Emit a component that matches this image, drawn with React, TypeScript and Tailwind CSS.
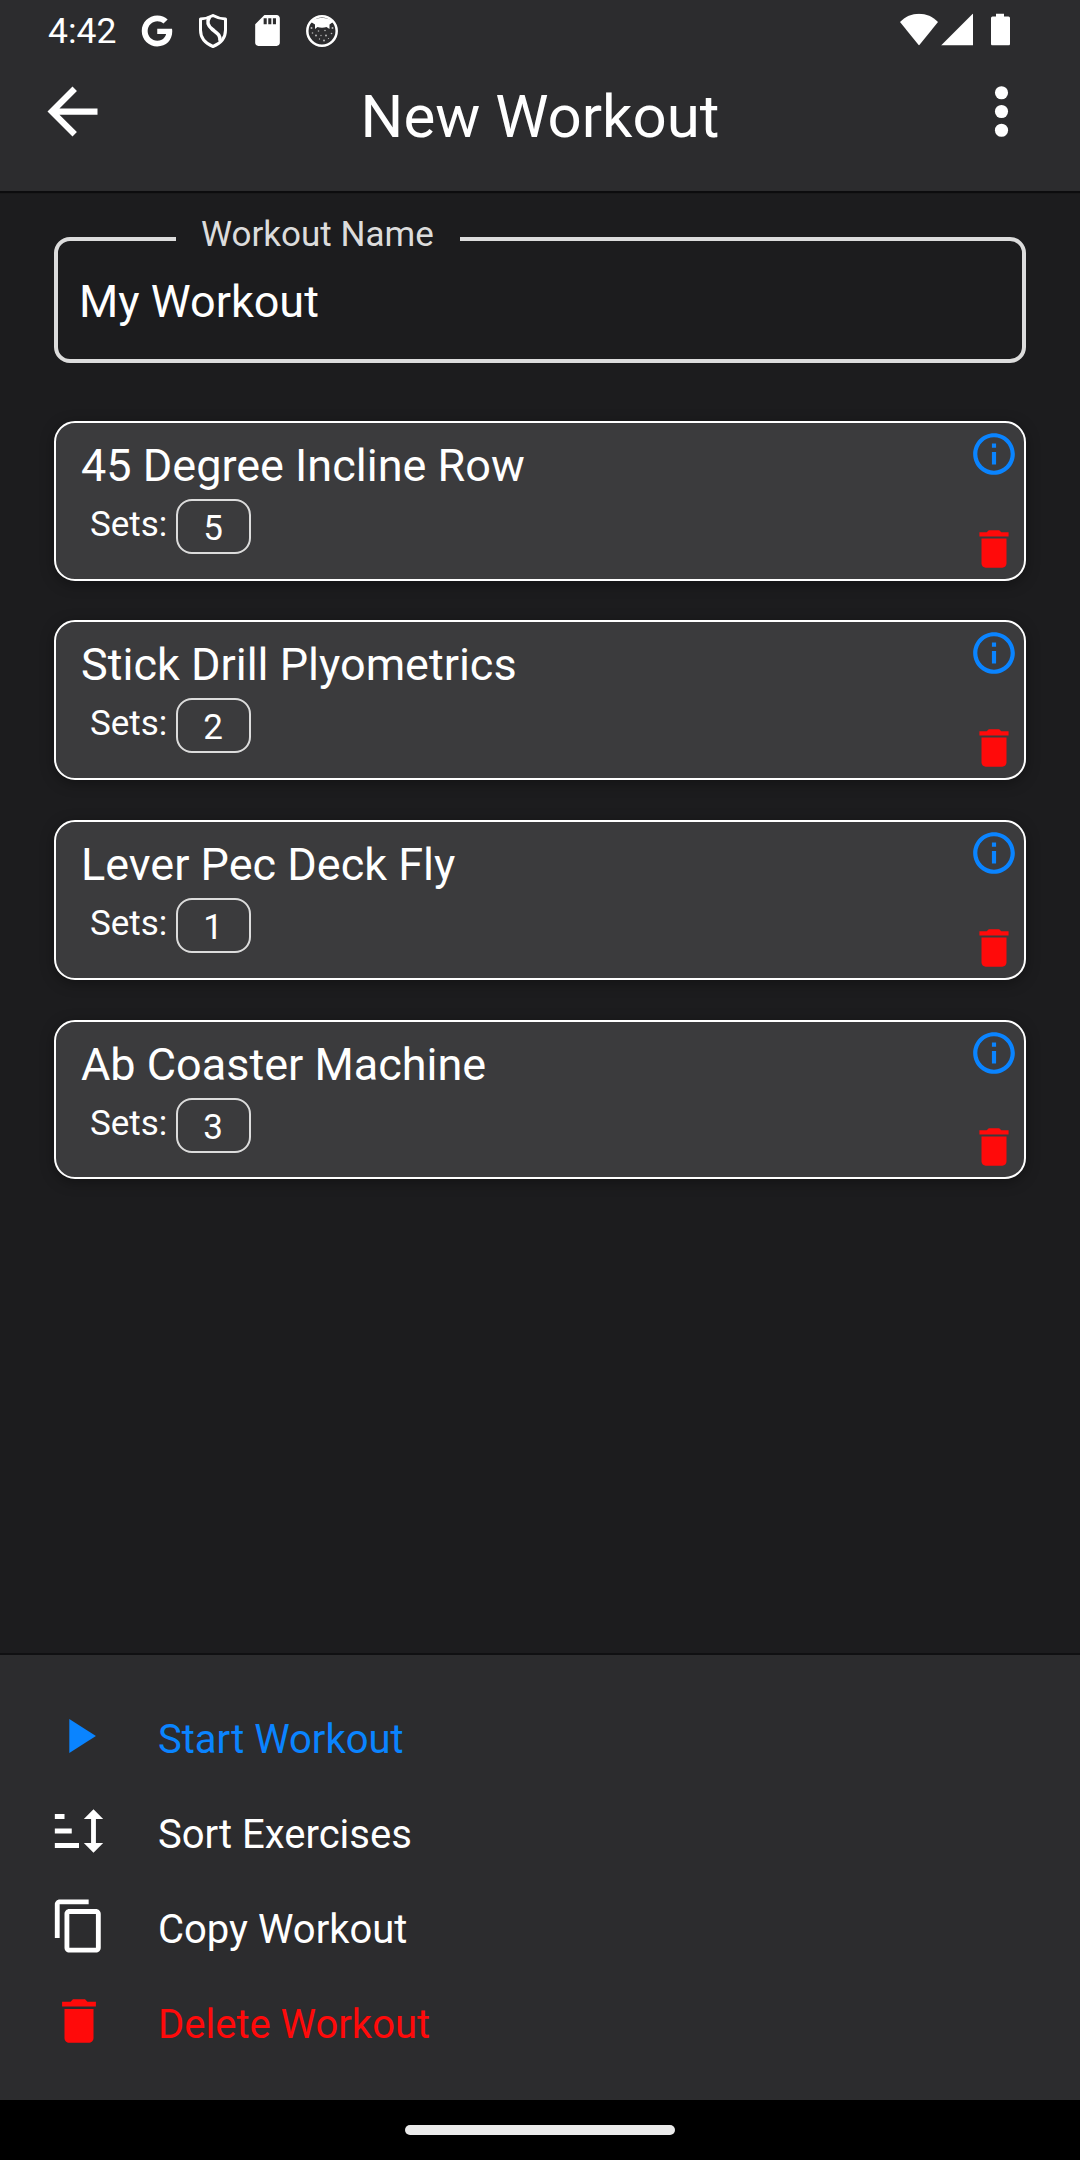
import React from "react";

const exercises = [
  { name: "45 Degree Incline Row", sets: 5 },
  { name: "Stick Drill Plyometrics", sets: 2 },
  { name: "Lever Pec Deck Fly", sets: 1 },
  { name: "Ab Coaster Machine", sets: 3 },
];

const TRASH = "M6 19c0 1.1.9 2 2 2h8c1.1 0 2-.9 2-2V7H6v12zM19 4h-3.5l-1-1h-5l-1 1H5v2h14V4z";
const INFO =
  "M11 7h2v2h-2zm0 4h2v6h-2zm1-9C6.48 2 2 6.48 2 12s4.48 10 10 10 10-4.48 10-10S17.52 2 12 2zm0 18c-4.41 0-8-3.59-8-8s3.59-8 8-8 8 3.59 8 8-3.59 8-8 8z";

const actions = [
  { label: "Start Workout", color: "text-[#0a84ff]", path: "M8 5v14l11-7z" },
  {
    label: "Sort Exercises",
    color: "text-white",
    path: "M2 5h4v2H2zM2 11h7v2H2zM2 17h10v2H2zM18 3l4 4h-3v10h3l-4 4-4-4h3V7h-3z",
  },
  {
    label: "Copy Workout",
    color: "text-white",
    path: "M16 1H4c-1.1 0-2 .9-2 2v14h2V3h12V1zm3 4H8c-1.1 0-2 .9-2 2v14c0 1.1.9 2 2 2h11c1.1 0 2-.9 2-2V7c0-1.1-.9-2-2-2zm0 16H8V7h11v14z",
  },
  { label: "Delete Workout", color: "text-[#ff0a0a]", path: TRASH },
];

function Icon({ d, className }: { d: string; className: string }) {
  return (
    <svg viewBox="0 0 24 24" fill="currentColor" className={`shrink-0 ${className}`}>
      <path d={d} />
    </svg>
  );
}

function StatusBar() {
  return (
    <div className="flex h-[61px] items-center pl-[48px] pr-[70px]">
      <span className="w-[93px] pt-[2px] text-[35.5px] leading-[61px]">4:42</span>
      <svg viewBox="0 0 488 512" fill="currentColor" className="h-8 w-8">
        <path d="M488 261.8C488 403.3 391.1 504 248 504 110.8 504 0 393.2 0 256S110.8 8 248 8c66.8 0 123 24.5 166.3 64.9l-67.5 64.9C258.5 52.6 94.3 116.6 94.3 256c0 86.5 69.1 156.6 153.7 156.6 98.2 0 135-70.4 140.8-106.9H248v-85.3h236.1c2.3 12.7 3.9 24.9 3.9 41.4z" />
      </svg>
      <svg viewBox="0 0 28 34" fill="none" stroke="currentColor" strokeWidth="3" strokeLinejoin="round" className="ml-[26px] h-[34px] w-7">
        <path d="M14 1.5C10.5 3.5 6 4.8 1.5 5v11c0 7.5 5 13.500 12.500 16.500C21.500 29.500 26.500 23.500 26.500 16V5C22 4.800 17.500 3.500 14 1.500Z" />
        <path d="M10.500 3C7.500 8 8.500 11.500 13.500 15.500S21.500 21 21 27" strokeWidth="3.6" />
      </svg>
      <Icon
        d="M18 2h-8L4.020 8 4 20c0 1.100.900 2 2 2h12c1.100 0 2-.900 2-2V4c0-1.100-.900-2-2-2zm-3.500 6h-2V4h2v4zm3 0h-2V4h2v4zm-6 0h-2V4h2v4z"
        className="ml-[22px] h-[37px] w-[37px]"
      />
      <svg viewBox="0 0 32 32" fill="currentColor" className="ml-[20px] h-8 w-8">
        <circle cx="16" cy="16" r="14.7" fill="none" stroke="currentColor" strokeWidth="2.5" />
        <path d="M5 7C9 1.500 23 1.500 27 7L23.500 9.500V14L20.500 12C18 13 14 13 11.500 12L9 14V9.500Z" />
        <g opacity=".65">
          <circle cx="5.5" cy="13" r="1" />
          <circle cx="26.5" cy="13" r="1" />
          <circle cx="12.5" cy="16" r=".8" />
          <circle cx="19" cy="15.5" r=".8" />
          <circle cx="6.5" cy="18" r=".8" />
          <circle cx="10" cy="20.5" r="1" />
          <circle cx="15" cy="20.5" r=".7" />
          <circle cx="20" cy="20.5" r="1" />
          <circle cx="25.5" cy="18.5" r=".8" />
          <circle cx="13.5" cy="24" r=".7" />
          <circle cx="18" cy="25.5" r="1" />
          <circle cx="22.5" cy="23.5" r=".6" />
        </g>
      </svg>
      <svg viewBox="0 0 38 32" fill="currentColor" className="ml-auto h-8 w-[38px] -translate-y-[1.5px]">
        <path d="M19 32 0 8.600C10 -2.600 28 -2.600 38 8.600Z" />
      </svg>
      <svg viewBox="0 0 32 32" fill="currentColor" className="ml-[3px] h-8 w-8 -translate-y-[1.5px]">
        <path d="M32 0v32H0z" />
      </svg>
      <svg viewBox="0 0 19 32" fill="currentColor" className="ml-[18px] h-8 w-[19px] -translate-y-[1.5px]">
        <path d="M5 0h8v3h4.500Q19 3 19 4.500v26Q19 32 17.500 32h-16Q0 32 0 30.500v-26Q0 3 1.500 3H5z" />
      </svg>
    </div>
  );
}

export default function App() {
  return (
    <div className="flex h-[2160px] w-[1080px] flex-col overflow-hidden bg-[#1c1c1e] font-['Roboto',sans-serif] text-white">
      <header className="h-[191px] shrink-0 bg-[#2c2c2e] shadow-[0_2px_1px_#0c0c0e]">
        <StatusBar />
        <div className="flex items-center justify-between pl-[35px] pr-[41px] pt-[8px]">
          <Icon d="M20 11H7.830l5.590-5.590L12 4l-8 8 8 8 1.410-1.410L7.830 13H20v-2z" className="h-[75px] w-[75px]" />
          <h1 className="pl-[6px] pt-[10px] text-[60px] leading-[75px]">New Workout</h1>
          <svg viewBox="0 0 24 24" fill="currentColor" className="h-[75px] w-[75px]">
            <circle cx="12" cy="6" r="2.1" />
            <circle cx="12" cy="12" r="2.1" />
            <circle cx="12" cy="18" r="2.1" />
          </svg>
        </div>
      </header>

      <main className="flex flex-1 flex-col px-[54px] pt-[24px]">
        <fieldset className="h-[148px] rounded-[16px] border-4 border-[#dcdcdc] pl-[21px]">
          <legend className="ml-[97px] pb-[8px] pl-[25px] pr-[26px] text-[35px] leading-[40px] text-[#dcdcdc]">
            Workout Name
          </legend>
          <div className="pt-[11px] text-[45px] leading-[56px]">My Workout</div>
        </fieldset>

        <ul className="mt-[57.8px] flex flex-col gap-[39.85px]">
          {exercises.map((e) => (
            <li
              key={e.name}
              className="flex h-[159.75px] justify-between rounded-[21px] border-2 border-white bg-[#3b3b3d] pl-[25px] pr-[5px] shadow-[0_3px_14px_rgba(0,0,0,0.35)]"
            >
              <div className="pt-[15px]">
                <h2 className="text-[45px] leading-[56px]">{e.name}</h2>
                <div className="flex pl-[9px] pt-[5px]">
                  <span className="w-[86px] text-[35px] leading-[51px]">Sets:</span>
                  <span className="h-[55px] w-[75px] rounded-[16px] border-2 border-[#dcdcdc] pr-px text-center text-[35px] leading-[55px]">
                    {e.sets}
                  </span>
                </div>
              </div>
              <div className="flex flex-col justify-between pb-[5px] pt-[6px]">
                <Icon d={INFO} className="h-[50px] w-[50px] text-[#0a84ff]" />
                <Icon d={TRASH} className="h-[50px] w-[50px] text-[#ff0a0a]" />
              </div>
            </li>
          ))}
        </ul>
      </main>

      <footer className="h-[447px] shrink-0 border-t-2 border-[#101012] bg-[#2c2c2e] pl-[50px] pt-[33px]">
        {actions.map((a) => (
          <div key={a.label} className={`flex h-[95px] items-center ${a.color}`}>
            <Icon d={a.path} className="h-[58px] w-[58px]" />
            <span className="ml-[50px] pt-[9px] text-[40px] leading-[50px]">{a.label}</span>
          </div>
        ))}
      </footer>

      <div className="flex h-[60px] shrink-0 items-center justify-center bg-black">
        <div className="h-[10px] w-[270px] rounded-full bg-[#ebebeb]" />
      </div>
    </div>
  );
}
